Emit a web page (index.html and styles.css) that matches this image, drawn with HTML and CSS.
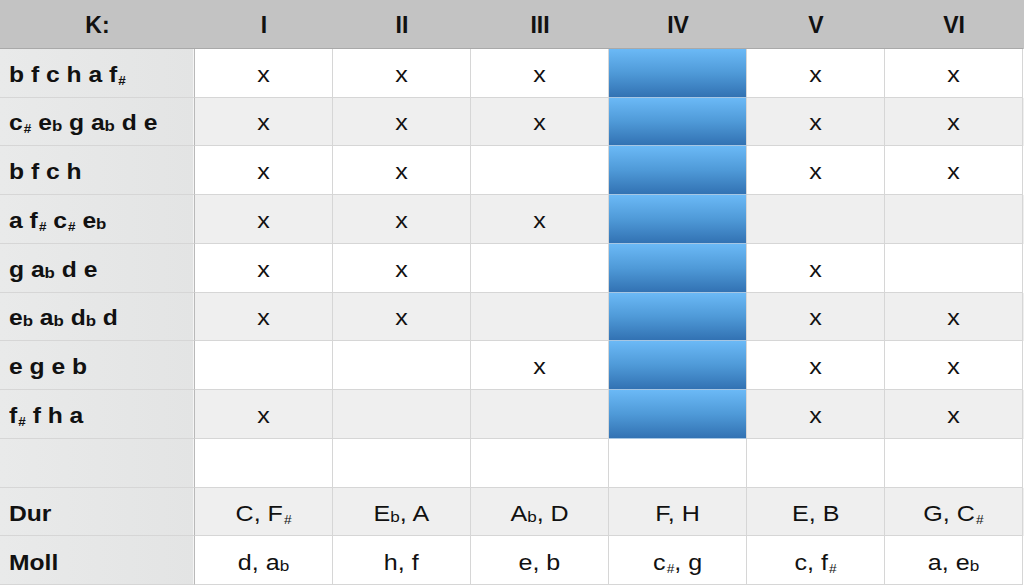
FILE: index.html
```html
<!DOCTYPE html>
<html>
<head>
<meta charset="utf-8">
<link rel="stylesheet" href="styles.css">
</head>
<body>
<div class="table">
  <div class="row head">
    <div class="c lab"><span class="t">K:</span></div><div class="c"><span class="t">I</span></div><div class="c"><span class="t">II</span></div><div class="c"><span class="t">III</span></div><div class="c"><span class="t">IV</span></div><div class="c"><span class="t">V</span></div><div class="c"><span class="t">VI</span></div>
  </div>
  <div class="row">
    <div class="c lab"><span class="t">b f c h a f<span class="s">#</span></span></div><div class="c"><span class="t">x</span></div><div class="c"><span class="t">x</span></div><div class="c"><span class="t">x</span></div><div class="c blue"></div><div class="c"><span class="t">x</span></div><div class="c"><span class="t">x</span></div>
  </div>
  <div class="row alt">
    <div class="c lab"><span class="t">c<span class="s">#</span> e<span class="s b">b</span> g a<span class="s b">b</span> d e</span></div><div class="c"><span class="t">x</span></div><div class="c"><span class="t">x</span></div><div class="c"><span class="t">x</span></div><div class="c blue"></div><div class="c"><span class="t">x</span></div><div class="c"><span class="t">x</span></div>
  </div>
  <div class="row">
    <div class="c lab"><span class="t">b f c h</span></div><div class="c"><span class="t">x</span></div><div class="c"><span class="t">x</span></div><div class="c"></div><div class="c blue"></div><div class="c"><span class="t">x</span></div><div class="c"><span class="t">x</span></div>
  </div>
  <div class="row alt">
    <div class="c lab"><span class="t">a f<span class="s">#</span> c<span class="s">#</span> e<span class="s b">b</span></span></div><div class="c"><span class="t">x</span></div><div class="c"><span class="t">x</span></div><div class="c"><span class="t">x</span></div><div class="c blue"></div><div class="c"></div><div class="c"></div>
  </div>
  <div class="row">
    <div class="c lab"><span class="t">g a<span class="s b">b</span> d e</span></div><div class="c"><span class="t">x</span></div><div class="c"><span class="t">x</span></div><div class="c"></div><div class="c blue"></div><div class="c"><span class="t">x</span></div><div class="c"></div>
  </div>
  <div class="row alt">
    <div class="c lab"><span class="t">e<span class="s b">b</span> a<span class="s b">b</span> d<span class="s b">b</span> d</span></div><div class="c"><span class="t">x</span></div><div class="c"><span class="t">x</span></div><div class="c"></div><div class="c blue"></div><div class="c"><span class="t">x</span></div><div class="c"><span class="t">x</span></div>
  </div>
  <div class="row">
    <div class="c lab"><span class="t">e g e b</span></div><div class="c"></div><div class="c"></div><div class="c"><span class="t">x</span></div><div class="c blue"></div><div class="c"><span class="t">x</span></div><div class="c"><span class="t">x</span></div>
  </div>
  <div class="row alt">
    <div class="c lab"><span class="t">f<span class="s">#</span> f h a</span></div><div class="c"><span class="t">x</span></div><div class="c"></div><div class="c"></div><div class="c blue"></div><div class="c"><span class="t">x</span></div><div class="c"><span class="t">x</span></div>
  </div>
  <div class="row">
    <div class="c lab"></div><div class="c"></div><div class="c"></div><div class="c"></div><div class="c"></div><div class="c"></div><div class="c"></div>
  </div>
  <div class="row alt big">
    <div class="c lab"><span class="t">Dur</span></div><div class="c"><span class="t">C, F<span class="s">#</span></span></div><div class="c"><span class="t">E<span class="s b">b</span>, A</span></div><div class="c"><span class="t">A<span class="s b">b</span>, D</span></div><div class="c"><span class="t">F, H</span></div><div class="c"><span class="t">E, B</span></div><div class="c"><span class="t">G, C<span class="s">#</span></span></div>
  </div>
  <div class="row big">
    <div class="c lab"><span class="t">Moll</span></div><div class="c"><span class="t">d, a<span class="s b">b</span></span></div><div class="c"><span class="t">h, f</span></div><div class="c"><span class="t">e, b</span></div><div class="c"><span class="t">c<span class="s">#</span>, g</span></div><div class="c"><span class="t">c, f<span class="s">#</span></span></div><div class="c"><span class="t">a, e<span class="s b">b</span></span></div>
  </div>
</div>
</body>
</html>
```
FILE: styles.css
```css
html, body {
  margin: 0;
  padding: 0;
  background: #ffffff;
}
.table {
  width: 1024px;
  height: 585px;
  display: flex;
  flex-direction: column;
  font-family: "Liberation Sans", Arial, sans-serif;
  color: #111;
}
.row {
  flex: 1 1 0;
  display: grid;
  grid-template-columns: 195px repeat(6, 138px) 1fr;
  background: #ffffff;
}
.row.alt {
  background: #efefef;
}
.c {
  box-sizing: border-box;
  display: flex;
  align-items: center;
  justify-content: center;
  padding-top: 4px;
  border-right: 1px solid #d6d6d6;
  border-bottom: 1px solid #d6d6d6;
  font-size: 22px;
  min-width: 0;
}
.t {
  display: inline-block;
  white-space: nowrap;
  transform: scaleX(1.14);
  transform-origin: center center;
}
.c.lab {
  justify-content: flex-start;
  padding-left: 9px;
  font-weight: bold;
  font-size: 22px;
  background: linear-gradient(to right, #e9eaea, #e3e4e4);
  border-right: 1px solid #b9b9b9;
  box-shadow: inset -1px 0 0 #f4f4f4;
}
.c.lab .t {
  transform: scaleX(1.12);
  transform-origin: left center;
}
.head {
  background: #c3c3c3;
}
.head .c {
  font-weight: bold;
  font-size: 23px;
  padding-top: 3px;
  border-right: none;
  border-bottom: 1px solid #a9a9a9;
}
.head .t,
.head .c.lab .t {
  transform: none;
}
.head .c.lab {
  justify-content: center;
  padding-left: 0;
  background: #c3c3c3;
  box-shadow: none;
}
.c.blue {
  background: linear-gradient(to bottom, #6bb9f6 0%, #4f9ad8 50%, #3272b3 100%);
  border-bottom: 1px solid #a6c6e3;
}
.big .c {
  font-size: 22px;
  padding-top: 5px;
}
.s {
  font-size: 12px;
  font-weight: bold;
  vertical-align: -3px;
  margin-left: 1px;
}
.s.b {
  font-size: 15px;
  vertical-align: -1px;
  margin-left: 0;
}
.c:not(.lab) .s {
  font-weight: normal;
}
```
